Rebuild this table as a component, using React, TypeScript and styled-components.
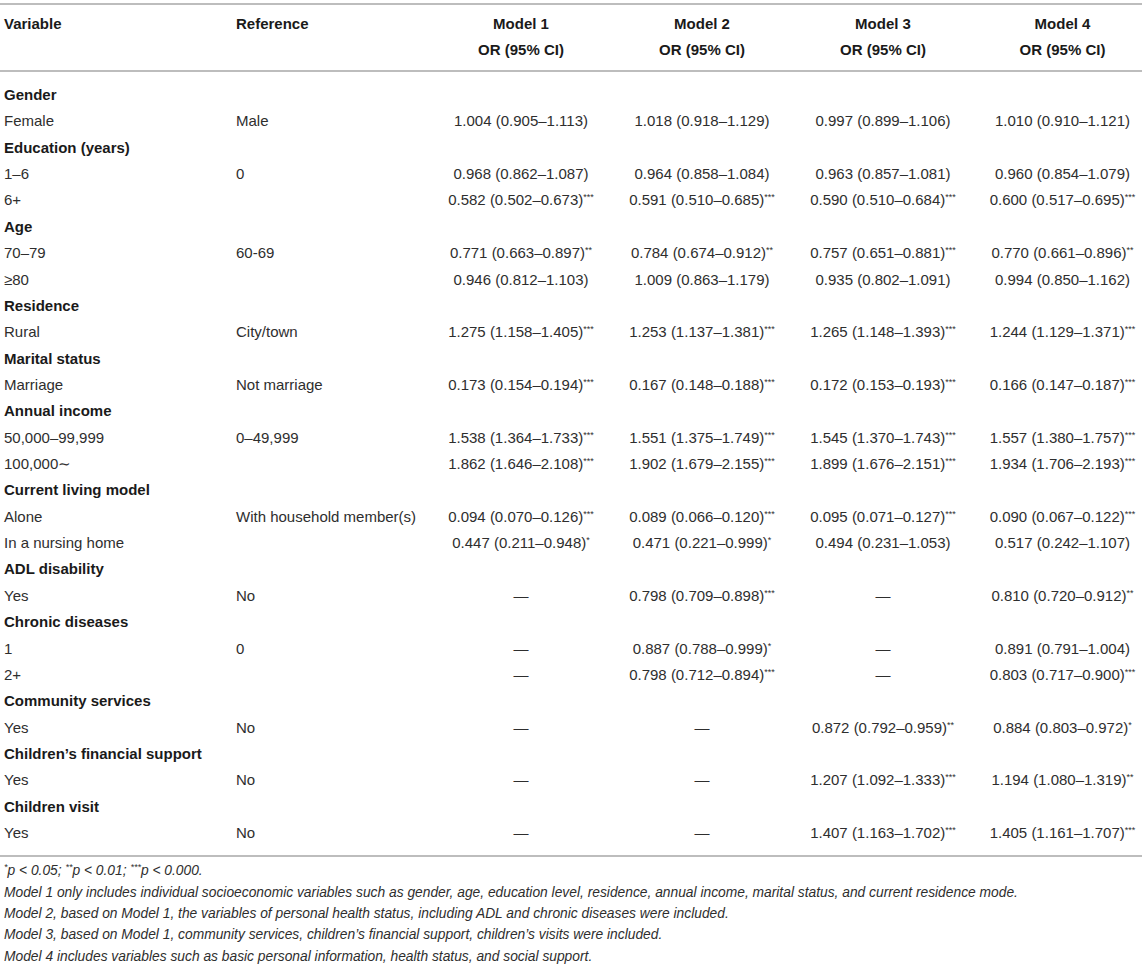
import React from "react";
import styled, { createGlobalStyle } from "styled-components";

const Global = createGlobalStyle`
  html, body { margin: 0; padding: 0; background: #fff; }
  body { font-family: "Liberation Sans", Arial, Helvetica, sans-serif; color: #2b2b2b; }
`;

const Page = styled.div`
  padding-top: 3px;
  width: 1142px;
`;

const Table = styled.table`
  width: 1142px;
  border-collapse: collapse;
  table-layout: fixed;
  font-size: 15px;
`;

const HeadRow = styled.tr`
  border-top: 2px solid #bdbdbd;
  border-bottom: 2px solid #bdbdbd;
`;

const Th = styled.th<{ $center?: boolean }>`
  font-weight: 700;
  color: #1a1a1a;
  text-align: ${(p) => (p.$center ? "center" : "left")};
  vertical-align: top;
  line-height: 26px;
  padding: 6px 4px 7px;
  white-space: nowrap;
`;

const Row = styled.tr<{ $first?: boolean; $last?: boolean }>`
  & > td {
    padding-top: ${(p) => (p.$first ? "10px" : "0")};
    padding-bottom: ${(p) => (p.$last ? "9px" : "0")};
  }
  ${(p) => (p.$last ? "border-bottom: 2px solid #bdbdbd;" : "")}
`;

const Td = styled.td<{ $center?: boolean; $bold?: boolean }>`
  line-height: 26.36px;
  padding-left: 4px;
  padding-right: 4px;
  white-space: nowrap;
  text-align: ${(p) => (p.$center ? "center" : "left")};
  font-weight: ${(p) => (p.$bold ? 700 : 400)};
  color: ${(p) => (p.$bold ? "#1a1a1a" : "#2e2e2e")};
`;

const Sup = styled.sup`
  font-size: 9px;
  line-height: 0;
  vertical-align: 5px;
`;

const Notes = styled.div`
  padding: 3px 4px 0;
  font-size: 13.8px;
  font-style: italic;
  line-height: 21.3px;
  color: #2e2e2e;
`;

const NoteLine = styled.div`
  white-space: nowrap;
`;

type Body = { kind: "group"; label: string } | { kind: "row"; label: string; ref?: string; vals: string[] };

const data: Body[] = [
  { kind: "group", label: "Gender" },
  { kind: "row", label: "Female", ref: "Male", vals: ["1.004 (0.905–1.113)", "1.018 (0.918–1.129)", "0.997 (0.899–1.106)", "1.010 (0.910–1.121)"] },
  { kind: "group", label: "Education (years)" },
  { kind: "row", label: "1–6", ref: "0", vals: ["0.968 (0.862–1.087)", "0.964 (0.858–1.084)", "0.963 (0.857–1.081)", "0.960 (0.854–1.079)"] },
  { kind: "row", label: "6+", vals: ["0.582 (0.502–0.673)***", "0.591 (0.510–0.685)***", "0.590 (0.510–0.684)***", "0.600 (0.517–0.695)***"] },
  { kind: "group", label: "Age" },
  { kind: "row", label: "70–79", ref: "60-69", vals: ["0.771 (0.663–0.897)**", "0.784 (0.674–0.912)**", "0.757 (0.651–0.881)***", "0.770 (0.661–0.896)**"] },
  { kind: "row", label: "≥80", vals: ["0.946 (0.812–1.103)", "1.009 (0.863–1.179)", "0.935 (0.802–1.091)", "0.994 (0.850–1.162)"] },
  { kind: "group", label: "Residence" },
  { kind: "row", label: "Rural", ref: "City/town", vals: ["1.275 (1.158–1.405)***", "1.253 (1.137–1.381)***", "1.265 (1.148–1.393)***", "1.244 (1.129–1.371)***"] },
  { kind: "group", label: "Marital status" },
  { kind: "row", label: "Marriage", ref: "Not marriage", vals: ["0.173 (0.154–0.194)***", "0.167 (0.148–0.188)***", "0.172 (0.153–0.193)***", "0.166 (0.147–0.187)***"] },
  { kind: "group", label: "Annual income" },
  { kind: "row", label: "50,000–99,999", ref: "0–49,999", vals: ["1.538 (1.364–1.733)***", "1.551 (1.375–1.749)***", "1.545 (1.370–1.743)***", "1.557 (1.380–1.757)***"] },
  { kind: "row", label: "100,000∼", vals: ["1.862 (1.646–2.108)***", "1.902 (1.679–2.155)***", "1.899 (1.676–2.151)***", "1.934 (1.706–2.193)***"] },
  { kind: "group", label: "Current living model" },
  { kind: "row", label: "Alone", ref: "With household member(s)", vals: ["0.094 (0.070–0.126)***", "0.089 (0.066–0.120)***", "0.095 (0.071–0.127)***", "0.090 (0.067–0.122)***"] },
  { kind: "row", label: "In a nursing home", vals: ["0.447 (0.211–0.948)*", "0.471 (0.221–0.999)*", "0.494 (0.231–1.053)", "0.517 (0.242–1.107)"] },
  { kind: "group", label: "ADL disability" },
  { kind: "row", label: "Yes", ref: "No", vals: ["—", "0.798 (0.709–0.898)***", "—", "0.810 (0.720–0.912)**"] },
  { kind: "group", label: "Chronic diseases" },
  { kind: "row", label: "1", ref: "0", vals: ["—", "0.887 (0.788–0.999)*", "—", "0.891 (0.791–1.004)"] },
  { kind: "row", label: "2+", vals: ["—", "0.798 (0.712–0.894)***", "—", "0.803 (0.717–0.900)***"] },
  { kind: "group", label: "Community services" },
  { kind: "row", label: "Yes", ref: "No", vals: ["—", "—", "0.872 (0.792–0.959)**", "0.884 (0.803–0.972)*"] },
  { kind: "group", label: "Children’s financial support" },
  { kind: "row", label: "Yes", ref: "No", vals: ["—", "—", "1.207 (1.092–1.333)***", "1.194 (1.080–1.319)**"] },
  { kind: "group", label: "Children visit" },
  { kind: "row", label: "Yes", ref: "No", vals: ["—", "—", "1.407 (1.163–1.702)***", "1.405 (1.161–1.707)***"] },
];

const colWidths = [232, 189, 200, 162, 200, 159];

function Value({ v }: { v: string }) {
  const m = v.match(/^(.*?)(\*+)$/);
  if (!m) return <>{v}</>;
  return (
    <>
      {m[1]}
      <Sup>{m[2]}</Sup>
    </>
  );
}

export default function App() {
  return (
    <>
      <Global />
      <Page>
        <Table>
          <colgroup>
            {colWidths.map((w, i) => (
              <col key={i} style={{ width: w }} />
            ))}
          </colgroup>
          <thead>
            <HeadRow>
              <Th>Variable</Th>
              <Th>Reference</Th>
              {[1, 2, 3, 4].map((n) => (
                <Th key={n} $center>
                  Model {n}
                  <br />
                  OR (95% CI)
                </Th>
              ))}
            </HeadRow>
          </thead>
          <tbody>
            {data.map((r, i) => {
              const first = i === 0;
              const last = i === data.length - 1;
              if (r.kind === "group") {
                return (
                  <Row key={i} $first={first} $last={last}>
                    <Td $bold colSpan={6}>
                      {r.label}
                    </Td>
                  </Row>
                );
              }
              return (
                <Row key={i} $first={first} $last={last}>
                  <Td>{r.label}</Td>
                  <Td>{r.ref ?? ""}</Td>
                  {r.vals.map((v, j) => (
                    <Td key={j} $center>
                      <Value v={v} />
                    </Td>
                  ))}
                </Row>
              );
            })}
          </tbody>
        </Table>
        <Notes>
          <NoteLine>
            <Sup>*</Sup>p &lt; 0.05; <Sup>**</Sup>p &lt; 0.01; <Sup>***</Sup>p &lt; 0.000.
          </NoteLine>
          <NoteLine>
            Model 1 only includes individual socioeconomic variables such as gender, age, education level, residence, annual income, marital status, and current residence mode.
          </NoteLine>
          <NoteLine>
            Model 2, based on Model 1, the variables of personal health status, including ADL and chronic diseases were included.
          </NoteLine>
          <NoteLine>
            Model 3, based on Model 1, community services, children’s financial support, children’s visits were included.
          </NoteLine>
          <NoteLine>Model 4 includes variables such as basic personal information, health status, and social support.</NoteLine>
        </Notes>
      </Page>
    </>
  );
}
